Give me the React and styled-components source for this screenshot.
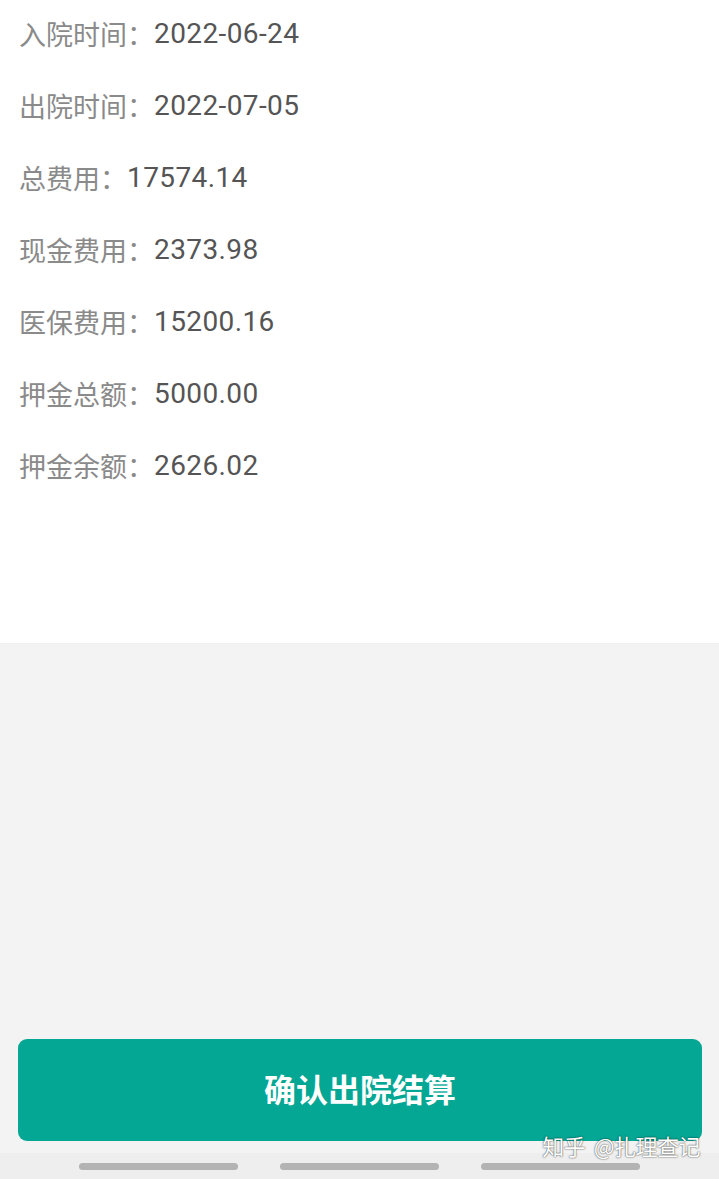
import React from "react";
import styled, { createGlobalStyle } from "styled-components";

const Global = createGlobalStyle`
  html, body { margin: 0; padding: 0; background: #f3f3f3; }
  body { font-family: Roboto, "Noto Sans CJK SC", sans-serif; }
`;

const Page = styled.div`
  position: relative;
  width: 719px;
  height: 1179px;
  display: flex;
  flex-direction: column;
  overflow: hidden;
`;

const InfoPanel = styled.section`
  background: #fff;
  height: 644px;
  flex: none;
  border-bottom: 1px solid #efefef;
  box-sizing: border-box;
`;

const Row = styled.div`
  height: 72px;
  padding: 0 0 6px 19px;
  box-sizing: border-box;
  display: flex;
  align-items: center;
  font-size: 27px;
  white-space: nowrap;
`;

const Label = styled.span`
  color: #8a8a8a;
  font-family: "Noto Sans CJK SC", sans-serif;
`;

const Value = styled.span`
  color: #555;
  font-family: Roboto, sans-serif;
  font-size: 28px;
  letter-spacing: 0.4px;
`;

const Spacer = styled.div`
  flex: 1;
  display: flex;
  flex-direction: column;
  justify-content: flex-end;
  padding: 0 17px 12px 18px;
`;

const ConfirmButton = styled.button`
  height: 102px;
  width: 100%;
  border: none;
  border-radius: 9px;
  background: #04a694;
  color: #fff;
  font-family: "Noto Sans CJK SC", sans-serif;
  font-weight: 700;
  font-size: 32px;
  padding: 0 0 4px;
  cursor: pointer;
`;

const NavBar = styled.div`
  height: 26px;
  flex: none;
  background: #eeeeee;
  display: flex;
  justify-content: center;
  gap: 42px;
  padding-top: 10px;
  box-sizing: border-box;
`;

const NavPill = styled.div`
  width: 159px;
  height: 7px;
  border-radius: 4px;
  background: #b3b3b3;
`;

const Watermark = styled.div`
  position: absolute;
  right: 19px;
  bottom: 18px;
  color: #fff;
  font-family: "Noto Sans CJK SC", sans-serif;
  font-size: 22px;
  text-shadow: 0 0 2px rgba(0, 0, 0, 0.6), 0 0 1px rgba(0, 0, 0, 0.5);
  letter-spacing: -0.5px;
  word-spacing: 4px;
`;

const rows = [
  ["入院时间：", "2022-06-24"],
  ["出院时间：", "2022-07-05"],
  ["总费用：", "17574.14"],
  ["现金费用：", "2373.98"],
  ["医保费用：", "15200.16"],
  ["押金总额：", "5000.00"],
  ["押金余额：", "2626.02"],
];

export default function App() {
  return (
    <Page>
      <Global />
      <InfoPanel>
        {rows.map(([l, v]) => (
          <Row key={l}>
            <Label>{l}</Label>
            <Value>{v}</Value>
          </Row>
        ))}
      </InfoPanel>
      <Spacer>
        <ConfirmButton>确认出院结算</ConfirmButton>
      </Spacer>
      <NavBar>
        <NavPill />
        <NavPill />
        <NavPill />
      </NavBar>
      <Watermark>知乎 @扎理查记</Watermark>
    </Page>
  );
}
